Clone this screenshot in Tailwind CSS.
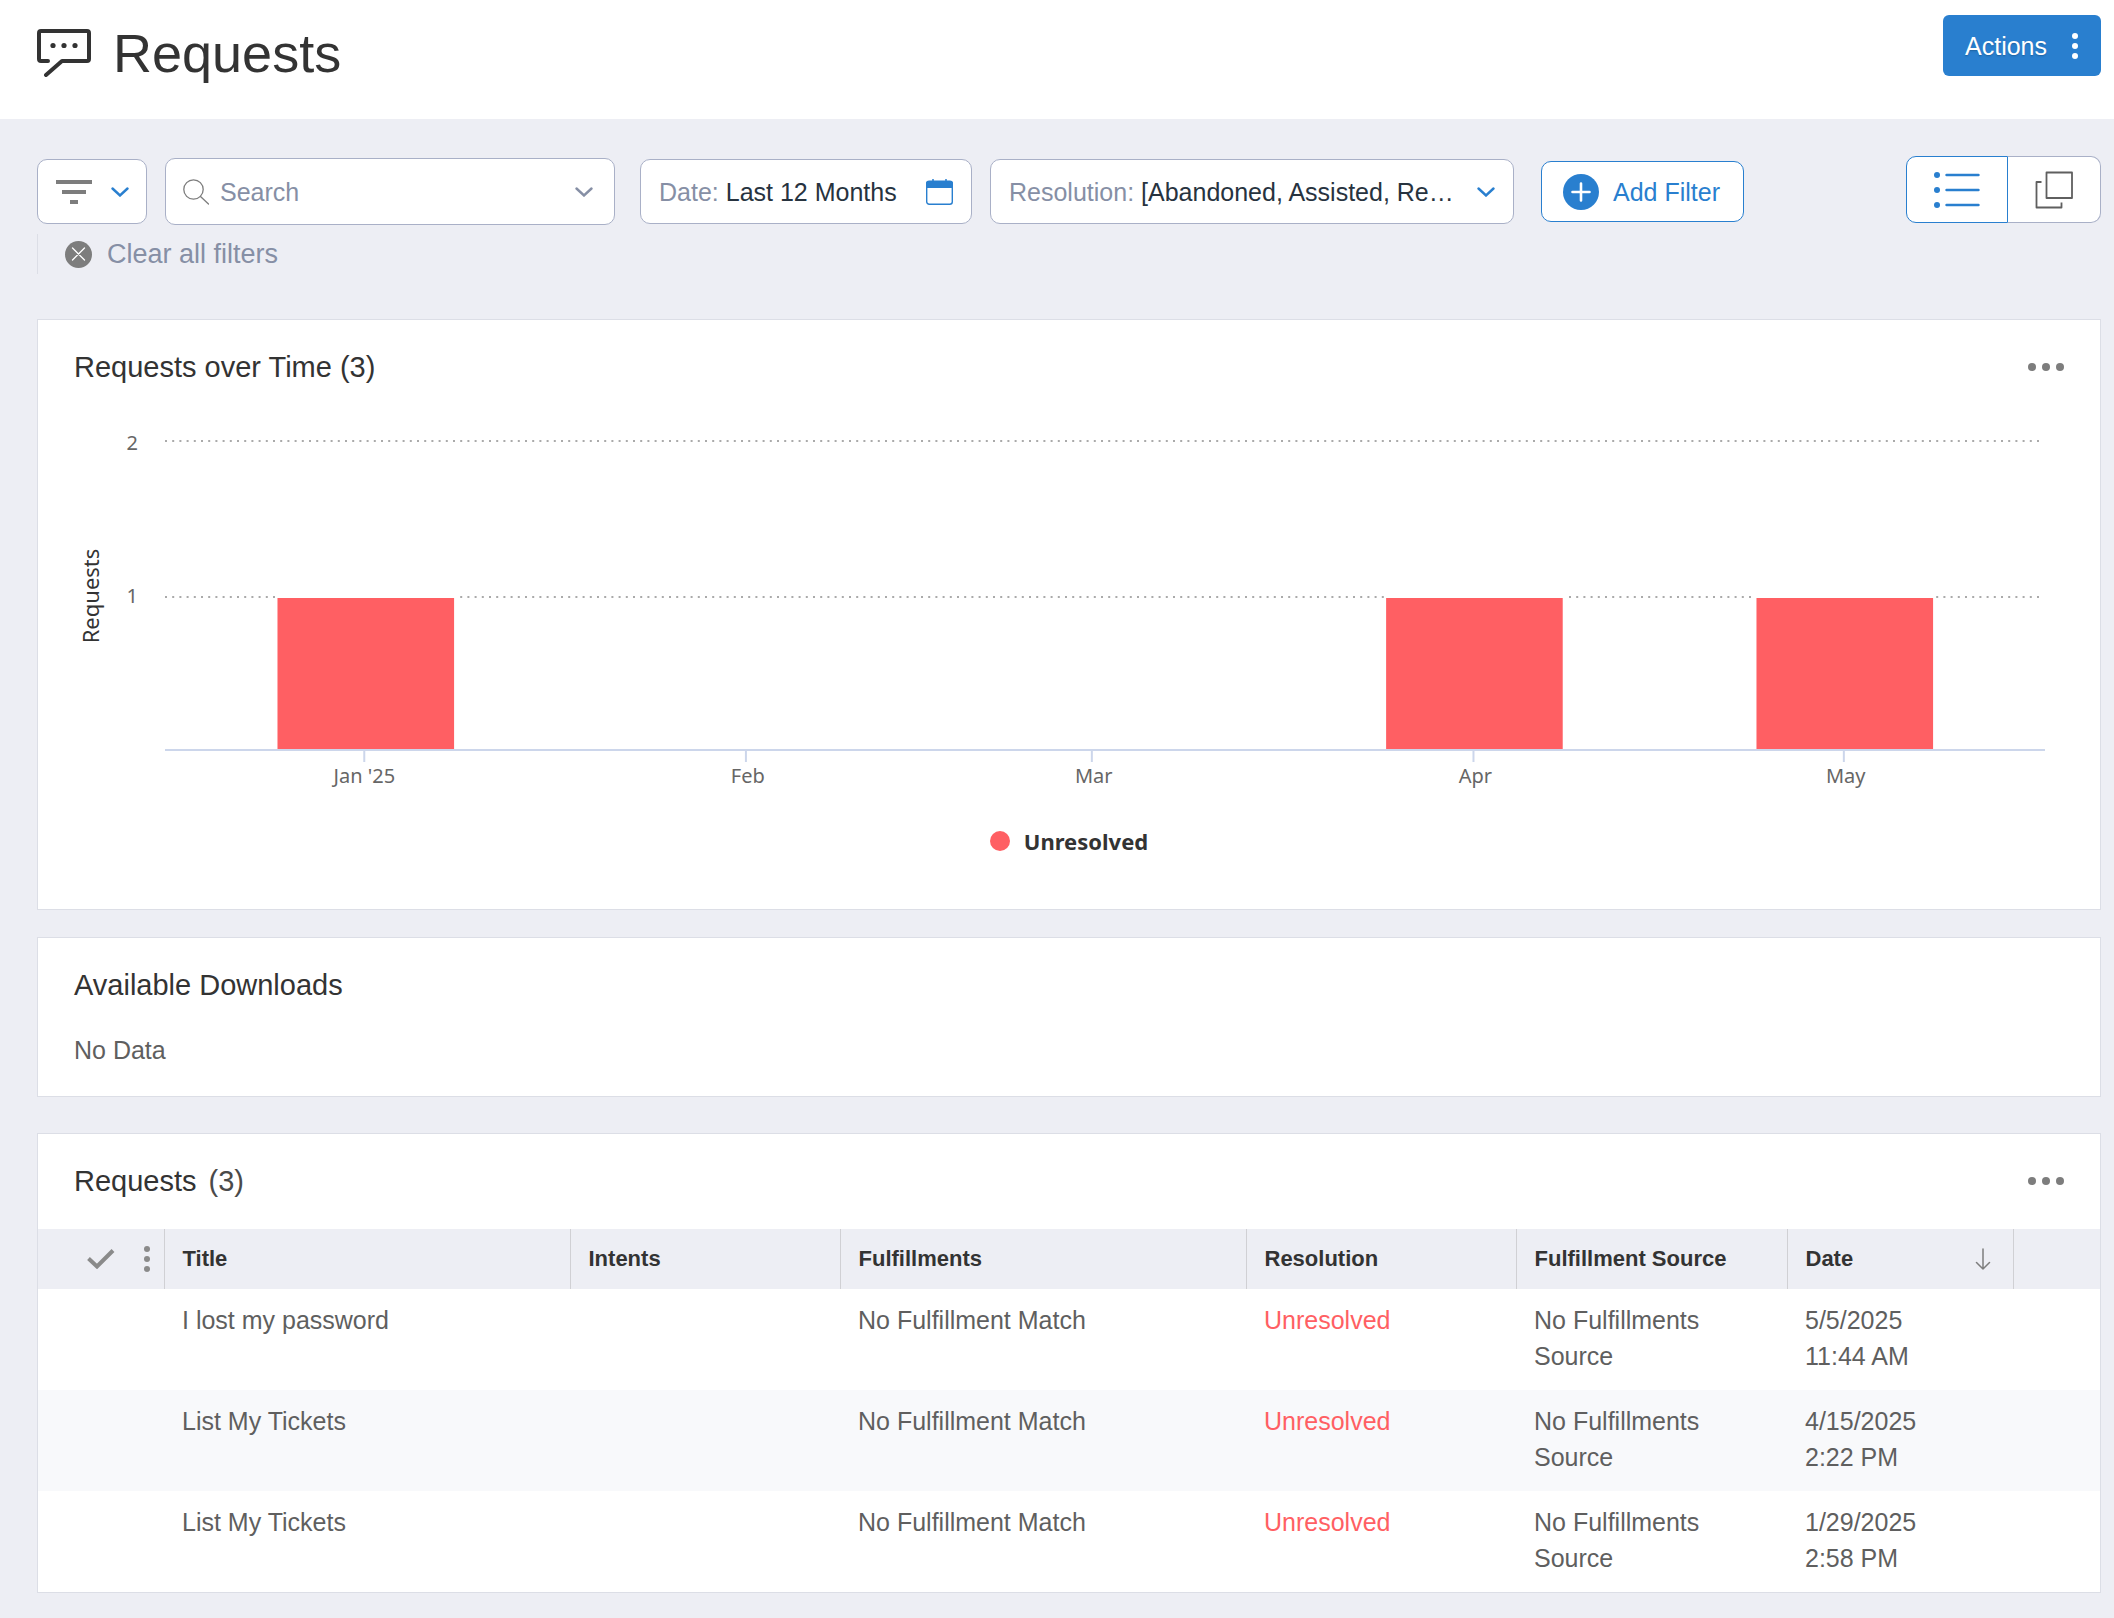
<!DOCTYPE html>
<html lang="en">
<head>
    <meta charset="UTF-8">
    <meta name="viewport" content="width=device-width, initial-scale=1.0">
    <title>Requests</title>
    <script src="https://cdn.jsdelivr.net/npm/@tailwindcss/browser@4"></script>
</head>
<body class="min-h-screen bg-[#edeef4] font-['Liberation_Sans',Arial,sans-serif] text-[25px] leading-9 text-[#5f5f5f] antialiased">
    <!-- Page header -->
    <header class="flex h-[119px] items-start justify-between bg-white pl-[37px] pr-[13px]">
        <div class="flex items-center gap-[22px] pt-[23px]">
            <svg class="h-12 w-[54px]" viewBox="0 0 54 48" fill="none" stroke="#333" stroke-width="4" stroke-linecap="round" stroke-linejoin="round" aria-hidden="true">
                <path d="M11 32H4a2 2 0 0 1-2-2V4a2 2 0 0 1 2-2h46a2 2 0 0 1 2 2v26a2 2 0 0 1-2 2H25L9 46"/>
                <g fill="#333" stroke="none"><circle cx="16" cy="16.500" r="2.600"/><circle cx="27" cy="16.500" r="2.600"/><circle cx="38" cy="16.500" r="2.600"/></g>
            </svg>
            <h1 class="text-[54px] leading-[60px] text-[#333]">Requests</h1>
        </div>
        <button type="button" class="mt-[15px] flex h-[61px] items-center gap-[25px] rounded-md bg-[#297fcf] pl-[22px] pr-[23px] text-white text-shadow-sm">
            Actions
            <svg class="h-7 w-[6px]" viewBox="0 0 6 28" fill="currentColor" aria-hidden="true"><circle cx="3" cy="4" r="3"/><circle cx="3" cy="14" r="3"/><circle cx="3" cy="24" r="3"/></svg>
        </button>
    </header>

    <main class="pl-[37px] pr-[13px] pt-[37px]">
        <!-- Filters -->
        <div class="flex h-[71px] items-center">
            <button type="button" aria-label="Saved filters" class="flex h-[65px] w-[110px] items-center justify-center gap-[19px] rounded-[10px] border border-[#a9b0c7] bg-white">
                <svg class="h-6 w-9" viewBox="0 0 36 24" fill="#7d7d7d" aria-hidden="true"><path d="M0 0h36v4H0zM6 10h24v4H6zM14 20h8v4h-8z"/></svg>
                <svg class="h-[10px] w-[18px]" viewBox="0 0 18 10" fill="none" stroke="#297fcf" stroke-width="2.400" stroke-linecap="round" aria-hidden="true"><path d="M1.500 1.500 9 8.500l7.500-7"/></svg>
            </button>

            <div class="ml-[18px] flex h-[67px] w-[450px] items-center rounded-[10px] border border-[#a9b0c7] bg-white pl-[17px] pr-[21px]">
                <svg class="h-[26px] w-[26px] shrink-0" viewBox="0 0 26 26" fill="none" stroke="#7d7d7d" stroke-width="1.300" stroke-linecap="round" aria-hidden="true"><circle cx="10.500" cy="10.500" r="9.700"/><path d="m17.500 17.500 8 7.500"/></svg>
                <input type="text" aria-label="Search" placeholder="Search" class="ml-[11px] min-w-0 flex-1 text-[#27333f] outline-none placeholder:text-[#868fa5]">
                <svg class="h-[10px] w-[18px] shrink-0" viewBox="0 0 18 10" fill="none" stroke="#868fa5" stroke-width="2.400" stroke-linecap="round" aria-hidden="true"><path d="M1.500 1.500 9 8.500l7.500-7"/></svg>
            </div>

            <div class="ml-[25px] flex h-[65px] w-[332px] items-center rounded-[10px] border border-[#a9b0c7] bg-white pl-[18px] pr-[18px]">
                <label for="date" class="text-[#868fa5]">Date:</label>
                <input id="date" type="text" value="Last 12 Months" readonly class="ml-[7px] min-w-0 flex-1 text-[#27333f] outline-none">
                <svg class="h-[26px] w-[27px] shrink-0" viewBox="0 0 27 26" fill="none" stroke="#297fcf" aria-hidden="true">
                    <rect x="0.700" y="2.200" width="25.600" height="23" rx="2.500" stroke-width="1.400"/>
                    <path fill="#297fcf" stroke="none" d="M0 4.500A2.500 2.500 0 0 1 2.500 2h22A2.500 2.500 0 0 1 27 4.500V9H0z"/>
                    <path stroke-width="1.500" d="M7 0v3M20 0v3"/>
                </svg>
            </div>

            <div class="ml-[18px] flex h-[65px] w-[524px] items-center rounded-[10px] border border-[#a9b0c7] bg-white pl-[18px] pr-[18px]">
                <label for="resolution" class="text-[#868fa5]">Resolution:</label>
                <select id="resolution" class="ml-[7px] mr-5 min-w-0 flex-1 appearance-none truncate text-[#27333f] outline-none">
                    <option>[Abandoned, Assisted, Resolved, Unresolved]</option>
                </select>
                <svg class="h-[10px] w-[18px] shrink-0" viewBox="0 0 18 10" fill="none" stroke="#297fcf" stroke-width="2.400" stroke-linecap="round" aria-hidden="true"><path d="M1.500 1.500 9 8.500l7.500-7"/></svg>
            </div>

            <button type="button" class="ml-[27px] flex h-[61px] w-[203px] items-center gap-[14px] rounded-[10px] border border-[#297fcf] bg-white pl-[21px] text-[#297fcf]">
                <svg class="h-9 w-9" viewBox="0 0 36 36" aria-hidden="true"><circle cx="18" cy="18" r="18" fill="#297fcf"/><path d="M18 9.500v17M9.500 18h17" stroke="#fff" stroke-width="2.600" stroke-linecap="round"/></svg>
                Add Filter
            </button>

            <div class="ml-auto flex self-start">
                <button type="button" aria-label="List view" class="flex h-[67px] w-[102px] items-center justify-center rounded-l-[10px] border border-[#297fcf] bg-white">
                    <svg class="h-9 w-[46px]" viewBox="0 0 46 36" fill="#297fcf" stroke="#297fcf" aria-hidden="true">
                        <g stroke="none"><circle cx="3" cy="3" r="3"/><circle cx="3" cy="18" r="3"/><circle cx="3" cy="33" r="3"/></g>
                        <path stroke-width="2.400" stroke-linecap="round" d="M12.500 3h32M12.500 18h32M12.500 33h32"/>
                    </svg>
                </button>
                <button type="button" aria-label="Card view" class="flex h-[67px] w-[93px] items-center justify-center rounded-r-[10px] border border-l-0 border-[#a9b0c7] bg-white">
                    <svg class="h-[38px] w-[38px]" viewBox="0 0 38 38" fill="none" stroke="#5f5f5f" stroke-width="1.800" stroke-linejoin="round" aria-hidden="true"><path d="M11.500 1.500h25.500v25.500H11.500zM6.500 11H1.500v25.500h25v-5"/></svg>
                </button>
            </div>
        </div>

        <div class="mt-[7px] flex h-10 items-center border-l border-[#dcdee6] pl-[27px]">
            <button type="button" class="flex items-center gap-[15px] text-[27px] text-[#868fa5]">
                <svg class="h-[27px] w-[27px]" viewBox="0 0 27 27" aria-hidden="true"><circle cx="13.500" cy="13.500" r="13.500" fill="#7d7d7d"/><path d="m7.500 7 12 12m0-12-12 12" stroke="#fff" stroke-width="1.300" stroke-linecap="round"/></svg>
                Clear all filters
            </button>
        </div>

        <!-- Requests over time -->
        <section class="mt-[45px] border border-[#dcdee6] bg-white pb-[50px] pt-[29px]">
            <div class="flex items-center justify-between px-9">
                <h2 class="text-[29px] text-[#333]">Requests over Time (3)</h2>
                <button type="button" aria-label="Chart options">
                    <svg class="h-[10px] w-9" viewBox="0 0 36 10" fill="#7d7d7d" aria-hidden="true"><circle cx="4" cy="5" r="4"/><circle cx="18" cy="5" r="4"/><circle cx="32" cy="5" r="4"/></svg>
                </button>
            </div>

            <div class="mt-10 flex pr-[55px] font-['Noto_Sans',sans-serif]">
                <svg class="h-[374px] w-[127px] shrink-0 text-[20px]" fill="#666">
                    <text x="61" y="171" text-anchor="middle" transform="rotate(-90 61 171)" class="text-[22px]" fill="#333">Requests</text>
                    <text x="100" y="25" text-anchor="end">2</text>
                    <text x="100" y="178" text-anchor="end">1</text>
                </svg>
                <svg class="h-[374px] min-w-0 flex-1 text-[20px]" fill="#666">
                    <g stroke="#aaa" stroke-width="2" stroke-dasharray="2 5.200">
                        <line x1="0" y1="16" x2="99.800%" y2="16"/>
                        <line x1="0" y1="172" x2="99.800%" y2="172"/>
                    </g>
                    <g fill="#ff5f63" stroke="#fff" stroke-width="2">
                        <rect x="5.930%" y="172" width="9.500%" height="153"/>
                        <rect x="64.900%" y="172" width="9.500%" height="153"/>
                        <rect x="84.600%" y="172" width="9.500%" height="153"/>
                    </g>
                    <g stroke="#ccd6eb" stroke-width="2">
                        <line x1="0" y1="325" x2="100%" y2="325"/>
                        <line x1="10.600%" y1="325" x2="10.600%" y2="337"/>
                        <line x1="30.900%" y1="325" x2="30.900%" y2="337"/>
                        <line x1="49.300%" y1="325" x2="49.300%" y2="337"/>
                        <line x1="69.600%" y1="325" x2="69.600%" y2="337"/>
                        <line x1="89.300%" y1="325" x2="89.300%" y2="337"/>
                    </g>
                    <g text-anchor="middle">
                        <text x="10.600%" y="358">Jan '25</text>
                        <text x="31%" y="358">Feb</text>
                        <text x="49.400%" y="358">Mar</text>
                        <text x="69.700%" y="358">Apr</text>
                        <text x="89.400%" y="358">May</text>
                    </g>
                </svg>
            </div>

            <div class="mt-6 flex items-center justify-center gap-[14px] font-['Noto_Sans',sans-serif] text-[22px] font-bold text-[#333]">
                <span class="h-5 w-5 rounded-full bg-[#ff5f63]"></span>
                Unresolved
            </div>
        </section>

        <!-- Downloads -->
        <section class="mt-[27px] border border-[#dcdee6] bg-white px-9 pb-7 pt-[29px]">
            <h2 class="text-[29px] text-[#333]">Available Downloads</h2>
            <p class="mt-[29px]">No Data</p>
        </section>

        <!-- Requests table -->
        <section class="mt-9 border border-[#dcdee6] bg-white pt-[29px]">
            <div class="mb-[30px] flex items-center justify-between px-9">
                <h2 class="flex gap-3 text-[29px] text-[#333]">Requests <span class="text-[#4a4a4a]">(3)</span></h2>
                <button type="button" aria-label="Table options">
                    <svg class="h-[10px] w-9" viewBox="0 0 36 10" fill="#7d7d7d" aria-hidden="true"><circle cx="4" cy="5" r="4"/><circle cx="18" cy="5" r="4"/><circle cx="32" cy="5" r="4"/></svg>
                </button>
            </div>

            <table class="w-full table-fixed text-left">
                <thead class="bg-[#edeef4] text-[22px] text-[#333]">
                    <tr class="h-[60px] *:not-last:border-r *:border-[#d0d0d4] *:px-[18px]">
                        <th class="w-[126px]">
                            <div class="-mr-1 ml-[31px] flex items-center justify-between">
                                <svg class="h-5 w-7" viewBox="0 0 28 20" fill="none" stroke="#8a8a8a" stroke-width="4" aria-hidden="true"><path d="m1.500 9.500 8.500 8L26 1.500"/></svg>
                                <svg class="h-[26px] w-[6px]" viewBox="0 0 6 26" fill="#8a8a8a" aria-hidden="true"><circle cx="3" cy="3" r="3"/><circle cx="3" cy="13" r="3"/><circle cx="3" cy="23" r="3"/></svg>
                            </div>
                        </th>
                        <th class="w-[406px]">Title</th>
                        <th class="w-[270px]">Intents</th>
                        <th class="w-[406px]">Fulfillments</th>
                        <th class="w-[270px]">Resolution</th>
                        <th class="w-[271px]">Fulfillment Source</th>
                        <th class="w-[226px]">
                            <div class="flex items-center justify-between">
                                Date
                                <svg class="mr-1 h-[22px] w-4" viewBox="0 0 16 22" fill="none" stroke="#7d7d7d" stroke-width="1.500" stroke-linecap="round" stroke-linejoin="round" aria-hidden="true"><path d="M8 1v20M1.500 14.500 8 21l6.500-6.500"/></svg>
                            </div>
                        </th>
                        <th></th>
                    </tr>
                </thead>
                <tbody class="align-top *:h-[101px] *:even:bg-[#f8f9fb]">
                    <tr class="*:px-[18px] *:pt-[13px]">
                        <td></td>
                        <td>I lost my password</td>
                        <td></td>
                        <td>No Fulfillment Match</td>
                        <td class="text-[#ff5f63]">Unresolved</td>
                        <td>No Fulfillments Source</td>
                        <td>5/5/2025<br>11:44 AM</td>
                        <td></td>
                    </tr>
                    <tr class="*:px-[18px] *:pt-[13px]">
                        <td></td>
                        <td>List My Tickets</td>
                        <td></td>
                        <td>No Fulfillment Match</td>
                        <td class="text-[#ff5f63]">Unresolved</td>
                        <td>No Fulfillments Source</td>
                        <td>4/15/2025<br>2:22 PM</td>
                        <td></td>
                    </tr>
                    <tr class="*:px-[18px] *:pt-[13px]">
                        <td></td>
                        <td>List My Tickets</td>
                        <td></td>
                        <td>No Fulfillment Match</td>
                        <td class="text-[#ff5f63]">Unresolved</td>
                        <td>No Fulfillments Source</td>
                        <td>1/29/2025<br>2:58 PM</td>
                        <td></td>
                    </tr>
                </tbody>
            </table>
        </section>
    </main>
</body>
</html>
